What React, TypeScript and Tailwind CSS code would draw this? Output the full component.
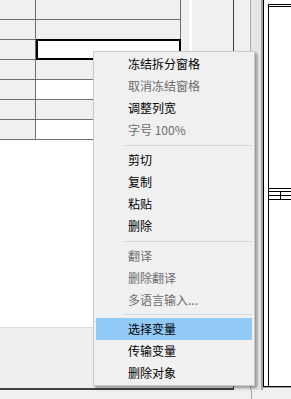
import React from 'react';

type Item = { label: string; disabled?: boolean; active?: boolean } | 'sep' | 'sep-short';

// context menu entries, top to bottom
const menuItems: Item[] = [
  { label: '冻结拆分窗格' },
  { label: '取消冻结窗格', disabled: true },
  { label: '调整列宽' },
  { label: '字号 100%', disabled: true },
  'sep',
  { label: '剪切' },
  { label: '复制' },
  { label: '粘贴' },
  { label: '删除' },
  'sep',
  { label: '翻译', disabled: true },
  { label: '删除翻译', disabled: true },
  { label: '多语言输入...', disabled: true },
  'sep-short',
  { label: '选择变量', active: true },
  { label: '传输变量' },
  { label: '删除对象' },
];

// true = white cell in the second column
const rows = [false, false, true, false, true, false, true];

const Grid = () => (
  <div className="flex flex-col">
    {rows.map((white, i) => (
      <div key={i} className="flex h-[20px] border-b border-[#707070]">
        <div className="w-[36px] bg-[#f0f0f0] border-r border-[#707070]" />
        <div
          className={`relative w-[145px] border-r border-[#707070] ${white ? 'bg-white' : 'bg-[#f0f0f0]'}`}
        >
          {i === 2 && (
            <div className="absolute -top-px bottom-[-1px] left-0 -right-px border-2 border-black" />
          )}
        </div>
      </div>
    ))}
  </div>
);

const ContextMenu = () => (
  <div className="absolute left-[93px] top-[51px] w-[162px] border border-[#cccccc] bg-[#f0f0f0] py-px shadow-[2px_2px_3px_rgba(0,0,0,0.4)]">
    {menuItems.map((item, i) =>
      item === 'sep' || item === 'sep-short' ? (
        <div
          key={i}
          className={`flex items-center pl-[30px] pr-[2px] ${item === 'sep' ? 'h-[8px]' : 'h-[7px]'}`}
        >
          <div className="h-px w-full bg-[#d7d7d7]" />
        </div>
      ) : (
        <div
          key={i}
          className={`mx-[2px] flex h-[22px] items-center pl-[32px] text-[12px] ${
            item.active ? 'bg-[#91c9f7]' : ''
          } ${item.disabled ? 'text-[#6d6d6d]' : 'text-black'}`}
        >
          {item.label}
        </div>
      )
    )}
  </div>
);

export default function App() {
  return (
    <div
      className="relative h-[399px] w-[291px] overflow-hidden bg-[#f0f0f0]"
      style={{ fontFamily: '"Noto Sans CJK SC", "Noto Sans", sans-serif' }}
    >
      <div className="flex h-[390px]">
        {/* left work area */}
        <div className="flex w-[234px] flex-col border-b-2 border-r border-[#404040]">
          <div className="flex h-[327px]">
            <div className="flex w-[181px] flex-col bg-white">
              <Grid />
            </div>
            <div className="flex flex-1 bg-[#f0f0f0]">
              <div className="w-[8px]" />
              <div className="w-[3px] bg-white" />
            </div>
          </div>
          <div className="flex-1 border-t border-[#dcdcdc] bg-[#efefef]" />
        </div>

        <div className="w-[16px] bg-[#f0f0f0]" />
        <div className="w-px bg-[#a8a8a8]" />
        <div className="w-[10px] bg-[#e6e6e6]" />
        <div className="w-[2px] bg-[#a0a0a0]" />

        {/* page preview */}
        <div className="flex w-[28px] flex-col">
          <div className="flex h-[387px] border-b border-l border-black bg-white pl-[4px] pt-[4px]">
            <div className="flex flex-1 flex-col border-l border-t-[3px] border-double border-black">
              <div className="h-[181px]" />
              <div className="h-px bg-black" />
              <div className="flex h-[3px] border-b border-black" />
              <div className="flex h-[4px] border-b border-black">
                <div className="w-[12px] border-r border-black" />
              </div>
              <div className="flex h-[4px] border-b border-black">
                <div className="w-[12px] border-r border-black" />
              </div>
            </div>
          </div>
          <div className="flex-1 border-t border-[#a0a0a0] bg-[#f0f0f0]" />
        </div>
      </div>

      <div className="flex h-[9px]">
        <div className="w-[251px]" />
        <div className="w-px bg-[#a8a8a8]" />
      </div>

      <ContextMenu />
    </div>
  );
}
